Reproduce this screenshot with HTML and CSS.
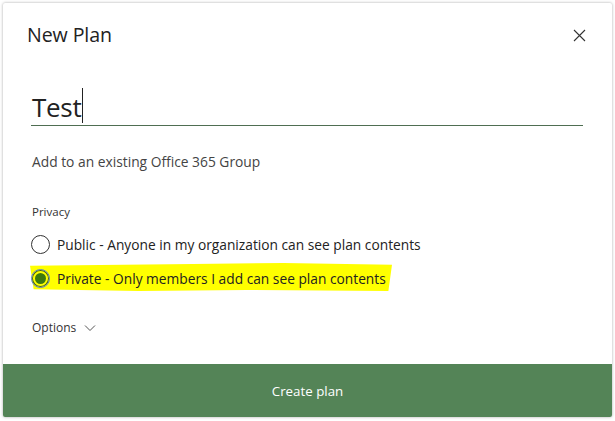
FILE: index.html
```html
<!DOCTYPE html>
<html>
<head>
<meta charset="utf-8">
<link rel="stylesheet" href="styles.css">
</head>
<body>
<div class="dialog">
  <div class="content">
    <div class="header">
      <h1 class="title">New Plan</h1>
      <svg class="close" width="13" height="13" viewBox="0 0 13 13"><path d="M1 1L12 12M12 1L1 12" stroke="#333" stroke-width="1.1" fill="none"/></svg>
    </div>
    <div class="name-field"><span class="name-text">Test</span><span class="caret"></span></div>
    <div class="group-link">Add to an existing Office 365 Group</div>
    <div class="label">Privacy</div>
    <div class="radio-row"><span class="radio"></span><span class="radio-text">Public - Anyone in my organization can see plan contents</span></div>
    <div class="radio-row highlighted"><span class="mark"></span><span class="radio checked"></span><span class="radio-text">Private - Only members I add can see plan contents</span></div>
    <div class="options">Options <svg class="chev" width="12" height="8" viewBox="0 0 12 8"><path d="M1 1.5L6 6.5L11 1.5" stroke="#555" stroke-width="1" fill="none"/></svg></div>
  </div>
  <div class="create">Create plan</div>
</div>
</body>
</html>
```
FILE: styles.css
```css
* { box-sizing: border-box; }
html, body { margin: 0; padding: 0; background: #fff; }
body { padding: 3px 3px 4px 3px; font-family: "Open Sans", "Noto Sans", sans-serif; color: #333; }
.dialog {
  width: 609px; height: 414px;
  background: #fff;
  box-shadow: 0 0 3px rgba(0,0,0,0.35);
  border-radius: 2px;
  display: flex; flex-direction: column;
}
.content { flex: 1; padding: 0 29px 0 24px; }
.header { display: flex; justify-content: space-between; align-items: center; height: 62px; padding-top: 0; }
.title { margin: 0; font-size: 19.6px; font-weight: 400; color: #222; letter-spacing: -0.1px; }
.close { margin-right: -3px; margin-top: 2px; }
.name-field {
  margin-top: 20px; margin-left: 4px;
  border-bottom: 1px solid #4f6e52;
  height: 41px; display: flex; align-items: flex-end; padding-left: 1px;
}
.name-text { font-size: 26px; color: #222; line-height: 36px; letter-spacing: -0.3px; }
.caret { width: 1px; height: 35px; background: #222; margin-left: 1px; margin-bottom: 2px; }
.group-link { margin-top: 26px; padding-left: 5px; font-size: 13.8px; color: #444; }
.label { margin-top: 33px; padding-left: 5px; font-size: 11.5px; color: #333; }
.radio-row { display: flex; align-items: center; height: 34px; padding-left: 4px; position: relative; font-size: 13.75px; color: #222; }
.label + .radio-row { margin-top: 8px; }
.radio { width: 19px; height: 19px; border: 1px solid #333; border-radius: 50%; margin-right: 7px; flex: none; background: #fff; position: relative; z-index: 1; }
.radio.checked { border: 1px solid #5b7fc9; background: #ffff00; box-shadow: inset 0 0 0 1px #4b6a10; }
.radio.checked::after { content: ""; position: absolute; left: 3px; top: 3px; width: 11px; height: 11px; border-radius: 50%; background: #3e7a0e; }
.radio-text { position: relative; z-index: 1; }
.mark {
  position: absolute; left: 3px; top: 2px; width: 362px; height: 28px;
  background: #ffff00;
  clip-path: polygon(0 10%, 45% 4%, 70% 0, 100% 6%, 99% 100%, 60% 96%, 30% 100%, 1% 94%);
}
.options { margin-top: 24px; padding-left: 5px; font-size: 12px; color: #333; display: flex; align-items: center; gap: 8px; }
.chev { margin-top: 1px; }
.create {
  height: 53px; background: #548457; color: #fff;
  display: flex; align-items: center; justify-content: center;
  font-size: 13.3px; border-radius: 0 0 2px 2px;
}
```
